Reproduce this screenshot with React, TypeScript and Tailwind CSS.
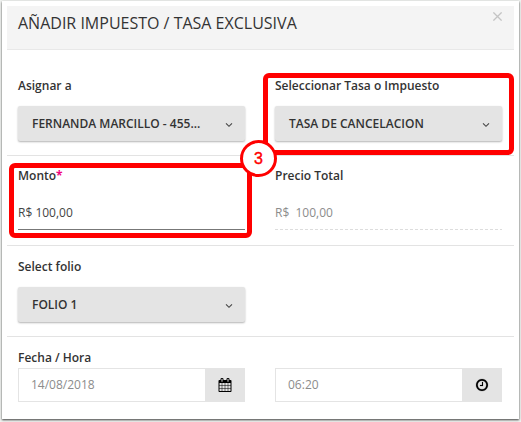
import type { ReactNode } from "react";

export default function App() {
  return (
    <div className="relative h-[422px] w-[521px] overflow-hidden bg-[#f0f2f0] pl-[2px] pt-px font-['Open_Sans',sans-serif] text-[12px] leading-4 text-[#333]">
      <div className="h-[418px] w-[517px] bg-white px-[5px] pt-[5px] shadow-[0_1px_2px_rgba(0,0,0,0.75)]">
        <header className="flex h-[44px] items-start justify-between border-b border-[#e8e8e8] bg-[#f4f4f4] pl-[11px] pr-[12px]">
          <h1 className="pt-[6px] text-[16px] leading-[22px]">AÑADIR IMPUESTO / TASA EXCLUSIVA</h1>
          <button aria-label="Cerrar" className="mt-[6px]">
            <svg width="9" height="9" viewBox="0 0 9 9" stroke="#c4c4c4" strokeWidth="1.3">
              <path d="M.4.4l8.2 8.2M8.6.4L.4 8.6" />
            </svg>
          </button>
        </header>

        <Row className="h-[106px] border-b pt-[28px]">
          <Field label="Asignar a">
            <Select value="FERNANDA MARCILLO - 455..." />
          </Field>
          <Field label="Seleccionar Tasa o Impuesto">
            <Select value="TASA DE CANCELACION" />
          </Field>
        </Row>

        <Row className="h-[90px] border-b pt-[12px]">
          <Field label="Monto" required>
            <div className="mt-[13px] h-[33px] border-b border-[#777] pt-[8px] text-[#444]">R$ 100,00</div>
          </Field>
          <Field label="Precio Total">
            <div className="mt-[13px] flex h-[33px] flex-col justify-between pt-[8px] text-[#8c8c8c]">
              <span className="whitespace-pre">R$  100,00</span>
              <div className="h-px bg-[repeating-linear-gradient(to_right,#ddd_0_3px,transparent_3px_5px)]" />
            </div>
          </Field>
        </Row>

        <Row className="h-[91px] border-b pt-[13px]">
          <Field label="Select folio">
            <Select value="FOLIO 1" />
          </Field>
        </Row>

        <Row className="pt-[13px]">
          <Field label="Fecha / Hora">
            <Picker value="14/08/2018" icon={<CalendarIcon />} />
          </Field>
          <Field label="">
            <Picker value="06:20" icon={<ClockIcon />} />
          </Field>
        </Row>
      </div>

      {/* Step annotations */}
      <div className="absolute left-[263px] top-[73px] h-[82px] w-[251px] rounded-[6px] border-[5px] border-[#f00]" />
      <div className="absolute left-[9px] top-[163px] h-[75px] w-[243px] rounded-[6px] border-[5px] border-[#f00]" />
      <div className="absolute left-[240px] top-[140px] flex h-[37px] w-[37px] items-center justify-center rounded-full border-[3px] border-[#f00] bg-white font-['Liberation_Sans',sans-serif] text-[16px] text-[#f00] [-webkit-text-stroke:0.4px_#f00]">
        3
      </div>
    </div>
  );
}

function Row({ className, children }: { className: string; children: ReactNode }) {
  return <div className={`grid grid-cols-[227px_227px] gap-x-[30px] border-[#e3e3e3] pl-[11px] ${className}`}>{children}</div>;
}

function Field({ label, required, children }: { label: string; required?: boolean; children: ReactNode }) {
  return (
    <div>
      <div className="h-4 font-[560]">
        {label}
        {required && <span className="font-bold text-[#f0057f]">*</span>}
      </div>
      {children}
    </div>
  );
}

function Select({ value }: { value: string }) {
  return (
    <button className="mt-[12px] flex h-[35px] w-[227px] items-center justify-between rounded-[2px] bg-[#e4e4e4] pl-[14px] pr-[12px] font-[560] shadow-[0_1px_2px_rgba(0,0,0,0.3)]">
      <span>{value}</span>
      <svg className="mt-[3px]" width="8" height="6" viewBox="0 0 8 6" fill="none" stroke="#444" strokeWidth="1.1">
        <path d="M1 1.3l3 3 3-3" />
      </svg>
    </button>
  );
}

function Picker({ value, icon }: { value: string; icon: ReactNode }) {
  return (
    <div className="mt-[2px] flex h-[34px] border border-[#e4e4e4]">
      <div className="flex flex-1 items-center pl-[12px] text-[#8c8c8c]">{value}</div>
      <button className="flex w-[39px] items-center justify-center bg-[#e4e4e4] text-black">{icon}</button>
    </div>
  );
}

function CalendarIcon() {
  return (
    <svg width="14" height="14" viewBox="0 0 1792 1792" fill="currentColor">
      <path d="M192 1664h288v-288h-288v288zm352 0h320v-288h-320v288zm-352-352h288v-320h-288v320zm352 0h320v-320h-320v320zm-352-384h288v-288h-288v288zm736 736h320v-288h-320v288zm-384-736h320v-288h-320v288zm768 736h288v-288h-288v288zm-384-352h320v-320h-320v320zm-352-864v-288q0-13-9.5-22.5t-22.5-9.5h-64q-13 0-22.5 9.5t-9.5 22.5v288q0 13 9.5 22.5t22.5 9.5h64q13 0 22.5-9.5t9.5-22.5zm736 864h288v-320h-288v320zm-384-384h320v-288h-320v288zm384 0h288v-288h-288v288zm32-480v-288q0-13-9.5-22.5t-22.5-9.5h-64q-13 0-22.5 9.5t-9.5 22.5v288q0 13 9.5 22.5t22.5 9.5h64q13 0 22.5-9.5t9.5-22.5zm384-64v1280q0 52-38 90t-90 38h-1408q-52 0-90-38t-38-90v-1280q0-52 38-90t90-38h128v-96q0-66 47-113t113-47h64q66 0 113 47t47 113v96h384v-96q0-66 47-113t113-47h64q66 0 113 47t47 113v96h128q52 0 90 38t38 90z" />
    </svg>
  );
}

function ClockIcon() {
  return (
    <svg width="14" height="14" viewBox="0 0 1792 1792" fill="currentColor" stroke="currentColor" strokeWidth="20">
      <path d="M1024 544v448q0 14-9 23t-23 9h-320q-14 0-23-9t-9-23v-64q0-14 9-23t23-9h224v-352q0-14 9-23t23-9h64q14 0 23 9t9 23zm416 352q0-148-73-273t-198-198-273-73-273 73-198 198-73 273 73 273 198 198 273 73 273-73 198-198 73-273zm224 0q0 209-103 385.5t-279.5 279.5-385.5 103-385.5-103-279.5-279.5-103-385.5 103-385.5 279.5-279.5 385.5-103 385.5 103 279.5 279.5 103 385.5z" />
    </svg>
  );
}
